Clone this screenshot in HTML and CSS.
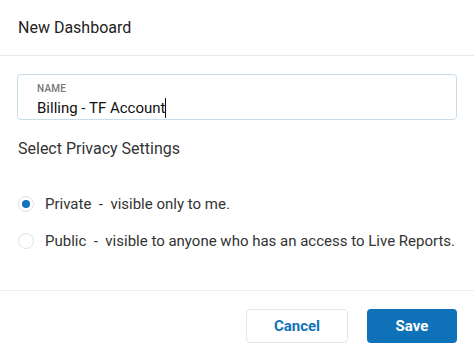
FILE: index.html
```html
<!DOCTYPE html>
<html lang="en">
<head>
<meta charset="UTF-8">
<meta name="viewport" content="width=device-width, initial-scale=1.0">
<title>New Dashboard</title>
<link rel="stylesheet" href="styles.css">
</head>

<body>
<div class="dialog">
  <header class="dialog-header">
    <h1>New Dashboard</h1>
  </header>

  <section class="dialog-body">
    <div class="name-field">
      <div class="name-label">NAME</div>
      <div class="name-value">Billing - TF Account<span class="caret"></span></div>
    </div>

    <h2 class="section-title">Select Privacy Settings</h2>

    <div class="radio-list">
      <label class="radio-row">
        <span class="radio checked"></span>
        <span>Private&nbsp; - &nbsp;visible only to me.</span>
      </label>
      <label class="radio-row">
        <span class="radio"></span>
        <span>Public&nbsp; - &nbsp;visible to anyone who has an access to Live Reports.</span>
      </label>
    </div>
  </section>

  <footer class="dialog-footer">
    <button class="btn btn-cancel">Cancel</button>
    <button class="btn btn-save">Save</button>
  </footer>
</div>
</body>
</html>
```

FILE: styles.css
```css
/* New dashboard dialog */
body {
  font-family: Roboto, 'Liberation Sans', Arial, sans-serif;
  background: white;
  color: #222;
  margin: 0;
}

.dialog {
  width: 474px;
  height: 359px;
  display: flex;
  flex-direction: column;
}

.dialog-header {
  height: 55px;
  padding: 0 18px;
  display: flex;
  align-items: center;
  border-bottom: 1px solid #e9e9e9;
}

.dialog-header h1 {
  margin: 0;
  font-size: 16px;
  font-weight: 400;
  color: #222;
}

.dialog-body {
  padding: 18px 17px 0 17px;
  height: 234px;
  box-sizing: border-box;
}

.name-field {
  height: 46px;
  box-sizing: border-box;
  border: 1px solid #c9dcea;
  border-radius: 4px;
  padding: 9px 19px 0 19px;
}

.name-label {
  font-size: 10px;
  line-height: 10px;
  color: #777;
  font-weight: 500;
  letter-spacing: 0.2px;
}

.name-value {
  font-size: 15px;
  line-height: 18px;
  margin-top: 4px;
  color: #111;
}

.caret {
  display: inline-block;
  width: 1px;
  height: 20px;
  background: #111;
  vertical-align: -5px;
}

.section-title {
  margin: 19px 0 0 1px;
  font-size: 16px;
  font-weight: 400;
  line-height: 19px;
  color: #333;
}

.radio-list {
  margin-top: 27px;
  display: flex;
  flex-direction: column;
}

.radio-row {
  display: flex;
  align-items: center;
  gap: 11px;
  height: 37px;
  padding-left: 1px;
  font-size: 15px;
  color: #333;
}

.radio {
  width: 16px;
  height: 16px;
  box-sizing: border-box;
  border: 1px solid #e2e2e2;
  border-radius: 50%;
  flex-shrink: 0;
  display: flex;
  align-items: center;
  justify-content: center;
}

.radio.checked::after {
  content: "";
  width: 8px;
  height: 8px;
  border-radius: 50%;
  background: #0f73bd;
}

.dialog-footer {
  border-top: 1px solid #ececec;
  padding: 18px 17px 0 17px;
  display: flex;
  justify-content: flex-end;
  gap: 19px;
}

.btn {
  height: 34px;
  border-radius: 4px;
  font-family: inherit;
  font-size: 15px;
  font-weight: 700;
  cursor: pointer;
}

.btn-cancel {
  width: 102px;
  background: white;
  color: #1172b8;
  border: 1px solid #e6e6e6;
}

.btn-save {
  width: 90px;
  background: #0f72b9;
  color: white;
  border: none;
}
```
